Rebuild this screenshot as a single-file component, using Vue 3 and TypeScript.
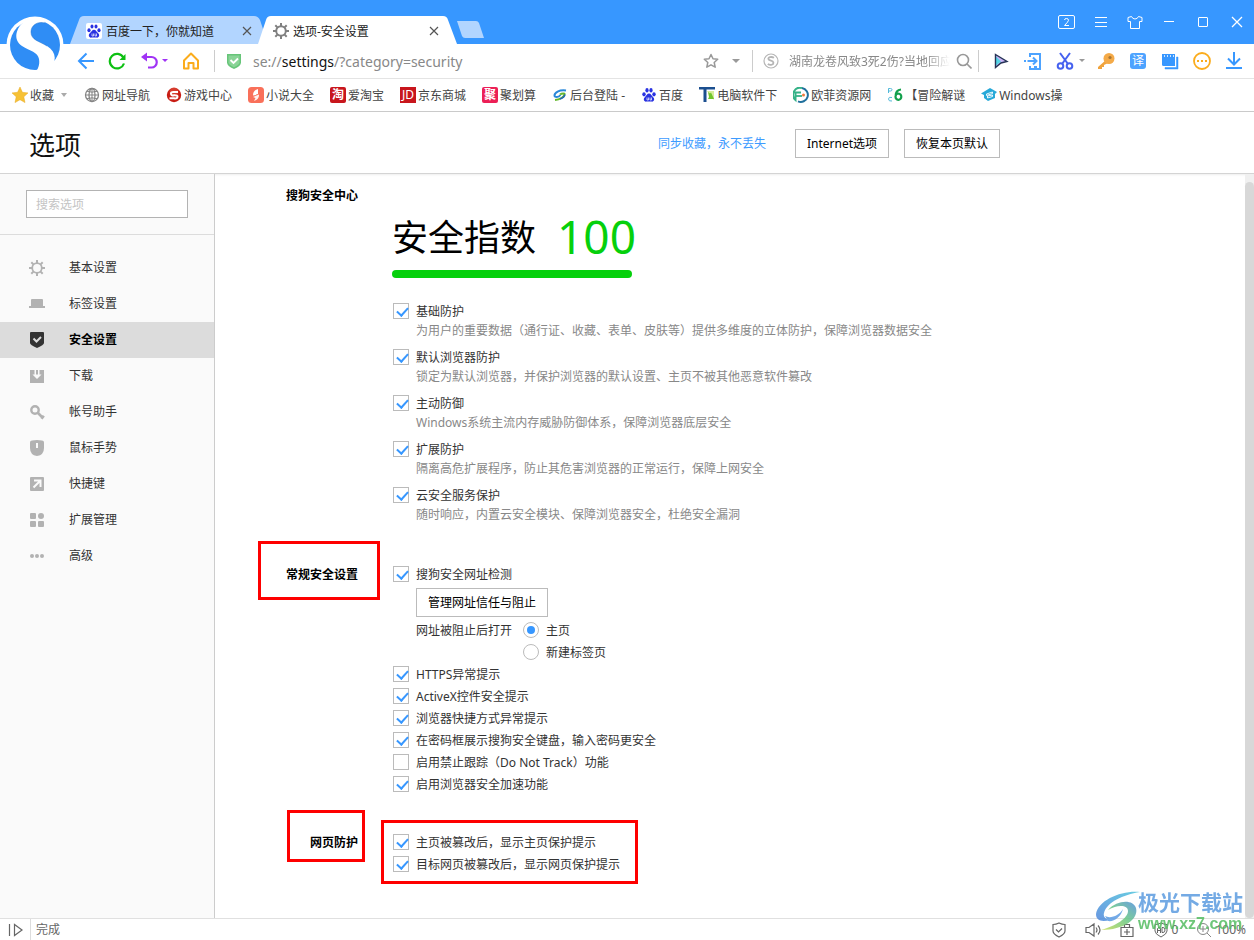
<script setup lang="ts">
import { ref } from 'vue'

interface Bookmark { id: string; label: string }
interface NavItem { id: string; label: string }
interface Option { id: string; label: string; checked: boolean; note?: string }

const bookmarks: Bookmark[] = [
  { id: 'globe', label: '网址导航' },
  { id: 'games', label: '游戏中心' },
  { id: 'novel', label: '小说大全' },
  { id: 'tao', label: '爱淘宝' },
  { id: 'jd', label: '京东商城' },
  { id: 'ju', label: '聚划算' },
  { id: 'swirl', label: '后台登陆 -' },
  { id: 'baidu', label: '百度' },
  { id: 'pc', label: '电脑软件下' },
  { id: 'ofei', label: '欧菲资源网' },
  { id: 'pc6', label: '【冒险解谜' },
  { id: 'win', label: 'Windows操' },
]

const navItems: NavItem[] = [
  { id: 'basic', label: '基本设置' },
  { id: 'tabs', label: '标签设置' },
  { id: 'security', label: '安全设置' },
  { id: 'download', label: '下载' },
  { id: 'account', label: '帐号助手' },
  { id: 'mouse', label: '鼠标手势' },
  { id: 'shortcut', label: '快捷键' },
  { id: 'extension', label: '扩展管理' },
  { id: 'advanced', label: '高级' },
]
const activeNav = ref('security')

const protections = ref<Option[]>([
  { id: 'p1', label: '基础防护', checked: true, note: '为用户的重要数据（通行证、收藏、表单、皮肤等）提供多维度的立体防护，保障浏览器数据安全' },
  { id: 'p2', label: '默认浏览器防护', checked: true, note: '锁定为默认浏览器，并保护浏览器的默认设置、主页不被其他恶意软件篡改' },
  { id: 'p3', label: '主动防御', checked: true, note: 'Windows系统主流内存威胁防御体系，保障浏览器底层安全' },
  { id: 'p4', label: '扩展防护', checked: true, note: '隔离高危扩展程序，防止其危害浏览器的正常运行，保障上网安全' },
  { id: 'p5', label: '云安全服务保护', checked: true, note: '随时响应，内置云安全模块、保障浏览器安全，杜绝安全漏洞' },
])
const siteCheck = ref(true)
const openAfterBlock = ref('home')
const general = ref<Option[]>([
  { id: 'g1', label: 'HTTPS异常提示', checked: true },
  { id: 'g2', label: 'ActiveX控件安全提示', checked: true },
  { id: 'g3', label: '浏览器快捷方式异常提示', checked: true },
  { id: 'g4', label: '在密码框展示搜狗安全键盘，输入密码更安全', checked: true },
  { id: 'g5', label: '启用禁止跟踪（Do Not Track）功能', checked: false },
  { id: 'g6', label: '启用浏览器安全加速功能', checked: true },
])
const pageGuard = ref<Option[]>([
  { id: 'w1', label: '主页被篡改后，显示主页保护提示', checked: true },
  { id: 'w2', label: '目标网页被篡改后，显示网页保护提示', checked: true },
])
</script>

<template>
  <div class="browser">
    <svg class="logo" viewBox="0 0 58 58" aria-hidden="true">
      <circle cx="29" cy="29" r="28.5" fill="#fff" />
      <circle cx="29" cy="29" r="25" fill="#2f8df5" />
      <path d="M20 4 C9 12 7 24 16 30 C24 35 32 36 33 43 C34 49 32 53 29 57 L43 55 C51 46 51 36 41 30 C33 25 25 24 25 16 C25 9 32 5 39 7 L36 2 L24 2 Z" fill="#fff" />
      <path d="M39 7 C32 5 25 9 25 16 C25 24 33 25 41 30" fill="none" stroke="#1c6fd0" stroke-width="1" opacity=".5" />
    </svg>

    <header class="tabbar">
      <div class="tab tab-idle">
        <svg class="tab-shape" viewBox="0 0 198 28" preserveAspectRatio="none" aria-hidden="true">
          <path d="M0 28 L9 4 Q10 0 14 0 H184 Q188 0 190 4 L198 28 Z" fill="#b2d5ff" />
        </svg>
        <svg class="i16" viewBox="0 0 16 16" aria-hidden="true">
          <rect width="16" height="16" rx="2" fill="#fff" />
          <g fill="#2932e1">
            <ellipse cx="3" cy="7.300" rx="1.600" ry="2" /><ellipse cx="6" cy="3.500" rx="1.500" ry="2" />
            <ellipse cx="10" cy="3.500" rx="1.500" ry="2" /><ellipse cx="13" cy="7.300" rx="1.600" ry="2" />
            <path d="M8 6.800 C6 6.800 5.600 8.800 4 10 C2 11.600 2.600 15 5.500 14.600 Q8 14.200 10.500 14.600 C13.400 15 14 11.600 12 10 C10.400 8.800 10 6.800 8 6.800Z" />
          </g>
          <path d="M6 10.500v2.500h1.500v-2.500M9 10.500v2.500h1.500v-2.500" stroke="#fff" stroke-width=".7" fill="none" />
        </svg>
        <span class="tab-title">百度一下，你就知道</span>
        <button class="tab-close" aria-label="关闭标签"><svg viewBox="0 0 10 10"><path d="M1 1l8 8M9 1l-8 8" stroke="#555" stroke-width="1.200" /></svg></button>
      </div>
      <div class="tab tab-current">
        <svg class="tab-shape" viewBox="0 0 199 28" preserveAspectRatio="none" aria-hidden="true">
          <path d="M0 28 L8 4 Q9 0 13 0 H185 Q189 0 190 4 L199 28 Z" fill="#fff" />
        </svg>
        <svg class="i16" viewBox="0 0 16 16" fill="none" stroke="#808080" aria-hidden="true">
          <circle cx="8" cy="8" r="4.800" stroke-width="2" />
          <path d="M8 0v3M8 13v3M0 8h3M13 8h3M2.300 2.300l2.100 2.100M11.600 11.600l2.100 2.100M13.700 2.300l-2.100 2.100M4.400 11.600l-2.100 2.100" stroke-width="2" />
        </svg>
        <span class="tab-title">选项-安全设置</span>
        <button class="tab-close" aria-label="关闭标签"><svg viewBox="0 0 10 10"><path d="M1 1l8 8M9 1l-8 8" stroke="#555" stroke-width="1.200" /></svg></button>
      </div>
      <button class="new-tab" aria-label="新建标签"><svg viewBox="0 0 28 17"><path d="M1 0H20Q22 0 23 2L28 17H9Q7 17 6 15Z" fill="#b2d5ff" /></svg></button>
      <div class="window-controls">
        <button aria-label="窗口数"><svg viewBox="0 0 18 18" fill="none" stroke="#fff"><rect x=".5" y="2.500" width="16" height="13" rx="1.500" /><path d="M6.500 7Q6.500 5.500 8.500 5.500T10.500 7.300Q10.500 8.500 6.500 12.500H11" /></svg></button>
        <button aria-label="菜单"><svg viewBox="0 0 18 18" stroke="#fff"><path d="M3 4.500h12M3 9.500h12M3 13.500h12" /></svg></button>
        <button aria-label="皮肤"><svg viewBox="0 0 18 18" fill="none" stroke="#fff"><path d="M5.500 3.500L2 4.500V8.500H4.500V15.500H13.500V8.500H16V4.500L12.500 3.500Q11.500 6 9 6T5.500 3.500Z" /></svg></button>
        <button aria-label="最小化"><svg viewBox="0 0 18 18" stroke="#fff"><path d="M4 8.500h10" /></svg></button>
        <button aria-label="最大化"><svg viewBox="0 0 18 18" fill="none" stroke="#fff"><rect x="4.500" y="4.500" width="9" height="9" rx=".5" /></svg></button>
        <button aria-label="关闭"><svg viewBox="0 0 18 18" stroke="#fff"><path d="M4 4l10 10M14 4L4 14" stroke-width="1.300" /></svg></button>
      </div>
    </header>

    <div class="toolbar">
      <div class="nav-buttons">
        <button class="tool back" aria-label="后退"><svg viewBox="0 0 18 18" fill="none" stroke="#3797ff" stroke-width="2"><path d="M17 9H2M9.500 1.500L2 9l7.500 7.500" /></svg></button>
        <button class="tool" aria-label="刷新"><svg viewBox="0 0 18 18" fill="none" stroke="#0dc012" stroke-width="2.200"><path d="M16 11.500A7.300 7.300 0 1 1 15.300 5.300" /><path d="M17.500 2v6H11.500z" fill="#0dc012" stroke="none" /></svg></button>
        <button class="tool undo" aria-label="恢复"><svg viewBox="0 0 18 18" fill="none" stroke="#a033f5" stroke-width="2.200"><path d="M4 5h7.500a4.800 4.800 0 0 1 0 10.500H8" /><path d="M1 5l6-4.500v9z" fill="#a033f5" stroke="none" /></svg></button>
        <svg class="caret" viewBox="0 0 8 4" aria-hidden="true"><path d="M1 0h6L4 3z" fill="#a033f5" /></svg>
        <button class="tool home" aria-label="主页"><svg viewBox="0 0 18 18" fill="none" stroke="#fbac1c" stroke-width="2"><path d="M2 8.500L9 1.500l7 7V16.500H11.500V11h-5v5.500H2z" stroke-linejoin="round" /></svg></button>
      </div>
      <div class="address">
        <svg class="i16" viewBox="0 0 16 16" aria-hidden="true"><path d="M1 1h14v8.500Q15 13 8 16Q1 13 1 9.500z" fill="#67c579" /><path d="M2.500 2.500h11v7q0 2-5.500 4.800Q2.500 11.500 2.500 9.500z" fill="#8ad497" /><path d="M4.500 7l3 3 4.500-4.500" stroke="#fff" stroke-width="1.800" fill="none" /></svg>
        <span class="url">se://<b>settings</b>/?category=security</span>
        <button class="star" aria-label="收藏"><svg class="i16" viewBox="0 0 16 16" fill="none" stroke="#999" stroke-width="1.500"><path d="M8 1.500l2 4.300 4.700.5-3.500 3.200 1 4.700L8 11.800l-4.200 2.400 1-4.700L1.300 6.300 6 5.800z" stroke-linejoin="round" /></svg></button>
        <svg class="caret" viewBox="0 0 8 4" aria-hidden="true"><path d="M0 0h8L4 4z" fill="#999" /></svg>
      </div>
      <div class="search">
        <svg class="i16" viewBox="0 0 16 16" fill="none" stroke="#b5b5b5" aria-hidden="true"><circle cx="8" cy="8" r="7" stroke-width="1.200" /><path d="M11 4.800Q9 3.600 7 4.200C4.500 5 5 7.200 8 7.700S11.200 11 8.800 11.700Q6.500 12.200 4.800 11" stroke-width="1.800" /></svg>
        <input class="search-input" type="text" aria-label="搜索" placeholder="湖南龙卷风致3死2伤?当地回应" />
        <button class="find" aria-label="搜索"><svg class="i16" viewBox="0 0 16 16" fill="none" stroke="#999" stroke-width="1.600"><circle cx="7" cy="7" r="5.500" /><path d="M11 11l4.500 4.500" /></svg></button>
      </div>
      <div class="extensions">
        <button class="tool" aria-label="指针"><svg viewBox="0 0 18 18"><path d="M3.500 2.500L15 9.500 9 11 3.500 15.500z" fill="#c9b3f5" /><path d="M3.500 4L9 9.500 3.500 14z" fill="#53d6e6" /><path d="M3.500 2.500L15 9.500 9 11 3.500 15.500z" fill="none" stroke="#263456" stroke-width="1.400" /></svg></button>
        <button class="tool" aria-label="发送到手机"><svg viewBox="0 0 18 18" fill="none" stroke="#4da3ff" stroke-width="2"><path d="M6 5V2h10v15H6v-3" /><path d="M0 9h2M3.500 9H12M9 5.500L12.500 9 9 12.500M10 15h3" /></svg></button>
        <button class="tool" aria-label="截图"><svg viewBox="0 0 18 18" fill="none" stroke="#4662ef" stroke-width="2"><circle cx="4.500" cy="14" r="2.800" /><circle cx="13.500" cy="14" r="2.800" /><path d="M4 1l8 11M14 1L6 12" /></svg></button>
        <svg class="caret small" viewBox="0 0 8 4" aria-hidden="true"><path d="M1 0h6L4 3z" fill="#999" /></svg>
        <button class="tool" aria-label="密码"><svg viewBox="0 0 18 18"><path d="M9 8L1 15v2h4v-2h2v-2l4-2z" fill="#f0a33c" /><circle cx="12" cy="6.500" r="5.500" fill="#f4aa48" /><circle cx="13" cy="5.500" r="1.600" fill="#a77534" /></svg></button>
        <button class="tool" aria-label="翻译"><span class="translate">译</span></button>
        <button class="tool" aria-label="多窗口"><svg viewBox="0 0 18 18"><path d="M1 2h13v12H2.500Q1 14 1 12.500z" fill="#3797ff" /><path d="M15.500 5H17v12H4v-1.500h11.500z" fill="#3797ff" stroke="#3797ff" stroke-width=".5" /><path d="M3 4h1M6 4h1M9 4h1M12 4h1" stroke="#fff" stroke-width="1.500" /></svg></button>
        <button class="tool" aria-label="更多"><svg viewBox="0 0 18 18"><circle cx="9" cy="9" r="8" fill="none" stroke="#fbac1c" stroke-width="1.800" /><g fill="#fbac1c"><rect x="4" y="8" width="2" height="2" /><rect x="8" y="8" width="2" height="2" /><rect x="12" y="8" width="2" height="2" /></g></svg></button>
        <button class="tool" aria-label="下载"><svg viewBox="0 0 18 18" fill="none" stroke="#3797ff" stroke-width="2"><path d="M9 0v12M3 6.500L9 12.500l6-6M1 16h16" /></svg></button>
      </div>
    </div>

    <nav class="bookmarks" aria-label="收藏栏">
      <button class="bookmark fav">
        <svg class="i16" viewBox="0 0 16 16" aria-hidden="true"><path d="M8 0l2.400 5.300 5.600.6-4.200 3.900L13 15.600 8 12.700 3 15.600 4.200 9.800 0 5.900l5.600-.6z" fill="#f6c135" stroke="#e8ab24" stroke-width=".5" /></svg>
        <span class="bookmark-label">收藏</span>
        <svg class="caret" viewBox="0 0 8 4" aria-hidden="true"><path d="M1 0h6L4 4z" fill="#aaa" /></svg>
      </button>
      <a v-for="b in bookmarks" :key="b.id" class="bookmark" href="#">
        <svg v-if="b.id === 'globe'" class="i16" viewBox="0 0 16 16" fill="none" stroke="#858585" stroke-width="1.300"><circle cx="8" cy="8" r="6.500" /><ellipse cx="8" cy="8" rx="3" ry="6.500" /><path d="M1.500 8h13M8 1.500v13M3 4.300q5 1.700 10 0M3 11.700q5-1.700 10 0" stroke-width="1" /></svg>
        <svg v-else-if="b.id === 'games'" class="i16" viewBox="0 0 16 16"><circle cx="8" cy="8" r="7.200" fill="#c81d14" /><circle cx="8" cy="5" r="4.500" fill="#e0513f" opacity=".6" /><path d="M12 5H7.500Q4.500 5 5 7t3 1.200Q12 8 11.500 10T8 11.300H3.500" fill="none" stroke="#fff" stroke-width="2" /></svg>
        <svg v-else-if="b.id === 'novel'" class="i16" viewBox="0 0 16 16"><rect width="16" height="16" rx="3.500" fill="#f9705a" /><path d="M10 2Q5 3 5 8.500L8 8v-.5L10 7z" fill="#fff" /><path d="M5 10L11 7.500Q11.500 12 6 14l1.500-3z" fill="#fff" opacity=".9" /></svg>
        <span v-else-if="b.id === 'tao'" class="tile tao">淘</span>
        <span v-else-if="b.id === 'jd'" class="tile jd">JD</span>
        <span v-else-if="b.id === 'ju'" class="tile ju">聚</span>
        <svg v-else-if="b.id === 'swirl'" class="i16" viewBox="0 0 16 16" fill="none"><path d="M14 3.500C7 2.500 2.500 6 2.500 8.500c0 2 4 2 6-.5" stroke="#2988d9" stroke-width="2" /><path d="M8 7.500c2-1.500 5-1.500 4.500 0C12 10 8 12.500 3 13" stroke="#65b82e" stroke-width="2" /><path d="M13 7.500c-.5 2.500-3 3.800-5 4.500" stroke="#2467b6" stroke-width="1.500" /></svg>
        <svg v-else-if="b.id === 'baidu'" class="i16" viewBox="0 0 16 16"><g fill="#2932e1"><ellipse cx="3" cy="7.300" rx="1.700" ry="2.100" /><ellipse cx="6" cy="3.300" rx="1.600" ry="2.200" /><ellipse cx="10" cy="3.300" rx="1.600" ry="2.200" /><ellipse cx="13" cy="7.300" rx="1.700" ry="2.100" /><path d="M8 6.500C6 6.500 5.600 8.600 4 10c-2 1.600-1.400 5 1.500 4.600Q8 14.200 10.500 14.600C13.400 15 14 11.600 12 10 10.400 8.600 10 6.500 8 6.500z" /></g><path d="M6 10.500v2.500h1.500v-2.500M9 10.500v2.500h1.500v-2.500" stroke="#fff" stroke-width=".7" fill="none" /></svg>
        <svg v-else-if="b.id === 'pc'" class="i16" viewBox="0 0 16 16"><path d="M0 0h16v2.500H7.500V15H4.500V2.500H0z" fill="#1b4f8f" /><path d="M8 4h7v9z" fill="#d7ed9b" /><path d="M9 5l2 1.500 1-1 3 6.500H9l1-2z" fill="#71c52c" /></svg>
        <svg v-else-if="b.id === 'ofei'" class="i16" viewBox="0 0 16 16" fill="none"><path d="M9 1A7 7 0 0 0 2.500 13V5.500H8" stroke="#35b287" stroke-width="2" /><path d="M9 1a7 7 0 1 1-4 13.300" stroke="#1f6f9c" stroke-width="2" /><path d="M3 9h6" stroke="#35b287" stroke-width="1.800" /><circle cx="10.500" cy="8" r="1.500" fill="#ef7b3c" /></svg>
        <svg v-else-if="b.id === 'pc6'" class="i16" viewBox="0 0 16 16" fill="none"><path d="M14 2.500Q8.500 3 8.500 9.500a2.900 3.200 0 1 0 3-3Q9 6.500 8.500 9" stroke="#12a04c" stroke-width="2.200" /><path d="M1.500 6V1.500h2q1.500 0 1.500 1.200T3.500 4h-2M5 10.500q-3.500-1-3.500 1.500T5 14" stroke="#52b9da" stroke-width="1" /></svg>
        <svg v-else class="i16" viewBox="0 0 16 16"><path d="M0 6.500L9 1l7 4-2 2v4l-7 3-4-3V8z" fill="#27a9d8" /><path d="M5.500 7l6-2v1.500l-6 2zM6.500 9l5-1v1.500l-5 1.500z" stroke="#fff" fill="none" stroke-width=".9" /></svg>
        <span class="bookmark-label">{{ b.label }}</span>
      </a>
    </nav>

    <div class="page-head">
      <div class="page-head-inner">
        <h1>选项</h1>
        <a class="sync" href="#">同步收藏，永不丢失</a>
        <button class="btn">Internet选项</button>
        <button class="btn">恢复本页默认</button>
      </div>
    </div>

    <div class="body">
      <aside class="sidebar">
        <div class="side-search"><input type="text" placeholder="搜索选项" aria-label="搜索选项" /></div>
        <nav class="side-nav" aria-label="设置分类">
          <button v-for="n in navItems" :key="n.id" class="nav-item" :class="{ active: n.id === activeNav }" @click="activeNav = n.id">
            <svg class="i16" viewBox="0 0 16 16" fill="currentColor" aria-hidden="true">
              <g v-if="n.id === 'basic'" fill="none" stroke="currentColor"><circle cx="8" cy="8" r="4.800" stroke-width="1.800" /><path d="M8 0v3M8 13v3M0 8h3M13 8h3M2.300 2.300l2.100 2.100M11.600 11.600l2.100 2.100M13.700 2.300l-2.100 2.100M4.400 11.600l-2.100 2.100" stroke-width="2" /></g>
              <path v-else-if="n.id === 'tabs'" d="M3 3h10q1 0 1 1v6h2v2H0v-2h2V4q0-1 1-1z" />
              <g v-else-if="n.id === 'security'"><path d="M2 0h12q1 0 1 1v10q0 2-7 5-7-3-7-5V1q0-1 1-1z" /><path d="M4.500 6.500l3 3L12 5" stroke="#dcdcdc" stroke-width="2" fill="none" /></g>
              <path v-else-if="n.id === 'download'" d="M1 2h4.500v4.500H3.500L8 11l4.500-4.500h-2V2H15v13H1zM7 2h2v4.500H7z" fill-rule="evenodd" />
              <g v-else-if="n.id === 'account'" fill="none" stroke="currentColor"><circle cx="6" cy="6" r="3.700" stroke-width="2.400" /><path d="M8.500 8.500L14 14M12.500 14.800l2.300-3" stroke-width="2.600" /></g>
              <path v-else-if="n.id === 'mouse'" fill-rule="evenodd" d="M3 0.500Q8-.5 13 .5q2 0 2 2V8q0 7-7 8-7-1-7-8V2.500q0-2 2-2zM7 3h2v5H7z" />
              <g v-else-if="n.id === 'shortcut'"><rect x="1" y="1" width="14" height="14" rx="1" /><path d="M5 4.500h6.500V11M11 5l-6.500 6.500" stroke="#fafafa" stroke-width="2" fill="none" /></g>
              <g v-else-if="n.id === 'extension'"><rect x="1" y="1" width="6" height="6" rx="1" /><circle cx="12" cy="4" r="3" /><rect x="1" y="9" width="6" height="6" rx="1" /><rect x="9" y="9" width="6" height="6" rx="1" /></g>
              <g v-else><circle cx="3" cy="8" r="2" /><circle cx="8" cy="8" r="2" /><circle cx="13" cy="8" r="2" /></g>
            </svg>
            <span>{{ n.label }}</span>
          </button>
        </nav>
      </aside>

      <main class="content">
        <section class="group">
          <h2>搜狗安全中心</h2>
          <div class="center">
            <div class="score"><span>安全指数</span><strong>100</strong></div>
            <div class="score-bar"></div>
            <div class="protections">
              <div v-for="p in protections" :key="p.id">
                <label class="row"><input v-model="p.checked" type="checkbox" />{{ p.label }}</label>
                <p class="note">{{ p.note }}</p>
              </div>
            </div>
          </div>
        </section>

        <section class="group">
          <span class="mark mark-general"></span>
          <h2>常规安全设置</h2>
          <div>
            <label class="row"><input v-model="siteCheck" type="checkbox" />搜狗安全网址检测</label>
            <button class="btn manage">管理网址信任与阻止</button>
            <div class="blocked" role="radiogroup" aria-labelledby="blocked-label">
              <span id="blocked-label">网址被阻止后打开</span>
              <div>
                <label class="row"><input v-model="openAfterBlock" type="radio" name="blocked" value="home" />主页</label>
                <label class="row"><input v-model="openAfterBlock" type="radio" name="blocked" value="tab" />新建标签页</label>
              </div>
            </div>
            <label v-for="o in general" :key="o.id" class="row"><input v-model="o.checked" type="checkbox" />{{ o.label }}</label>
          </div>
        </section>

        <section class="group">
          <span class="mark mark-guard"></span>
          <span class="mark mark-options"></span>
          <h2>网页防护</h2>
          <div>
            <label v-for="o in pageGuard" :key="o.id" class="row"><input v-model="o.checked" type="checkbox" />{{ o.label }}</label>
          </div>
        </section>
      </main>
      <div class="scrollbar"><div class="thumb"></div></div>
    </div>

    <footer class="status">
      <button class="side-toggle" aria-label="展开侧栏"><svg class="i16" viewBox="0 0 16 16" fill="none" stroke="#666"><path d="M1.500 2v12M6.500 2.500v11L14 8z" stroke-width="1.200" /></svg></button>
      <span class="done">完成</span>
      <div class="status-icons">
        <svg class="i16" viewBox="0 0 16 16" fill="none" stroke="#666"><path d="M8 1q3 1.500 6 1.500V9q0 3-6 6-6-3-6-6V2.500Q5 2.500 8 1zM5 7.500l2.500 2.500L11 6.500" stroke-width="1.200" /></svg>
        <svg class="i16" viewBox="0 0 16 16" fill="none" stroke="#666"><path d="M1 5.500h3L9 2v12l-5-3.500H1zM11 5.500q2 2.500 0 5M13 3.500q4 4.500 0 9" stroke-width="1.200" /></svg>
        <svg class="i16" viewBox="0 0 16 16" fill="none" stroke="#666"><path d="M2 5.500h12v9H2zM5.500 5V2.500h5V5M5 10h6M8 7v6" stroke-width="1.200" /></svg>
        <span class="ad"><svg class="i16" viewBox="0 0 16 16" fill="none" stroke="#666"><path d="M8 1q3 1.500 6 1.500V9q0 3-6 6-6-3-6-6V2.500Q5 2.500 8 1z" /><path d="M4.500 11V6.500L6 5l1.500 1.500V11M4.500 8.500h3M9 5.500h1q2 0 2 2.500t-2 2.500H9z" /></svg>0</span>
        <span class="zoom"><svg class="i16" viewBox="0 0 16 16" fill="none" stroke="#888"><circle cx="7" cy="7" r="5.500" /><path d="M4 7h6M7 4v6M11 11l4 4" /></svg>100%</span>
      </div>
    </footer>

    <div class="watermark">
      <svg viewBox="0 0 46 40" aria-hidden="true">
        <defs>
          <linearGradient id="wm-blue" x1="1" y1="0" x2="0" y2="1"><stop offset="0" stop-color="#4fc5dc" /><stop offset="1" stop-color="#4f86dc" /></linearGradient>
          <linearGradient id="wm-green" x1="0" y1="1" x2="1" y2="0"><stop offset="0" stop-color="#c9dc55" /><stop offset=".55" stop-color="#67c784" /><stop offset="1" stop-color="#4f8fdc" /></linearGradient>
        </defs>
        <path d="M45 1C27-1 3 9 1 23c0 7 6 8 14 6C10 28 8 26 9 22 12 11 28 4 45 1z" fill="url(#wm-blue)" />
        <path d="M13 19C22 9 38 8 41 17c3 11-12 22-35 22 15-4 27-12 27-19 0-6-10-7-20-1z" fill="url(#wm-green)" />
        <path d="M10 25c5 3 14 0 18-7-2 8-9 13-15 12z" fill="#5c9ce3" />
      </svg>
      <div class="watermark-text"><span class="wm-name">极光下载站</span><span class="wm-site">www.xz7.com</span></div>
    </div>
  </div>
</template>

<style>
html, body { margin: 0; }
</style>

<style scoped>
* { box-sizing: border-box; }
.browser {
  position: relative;
  display: flex;
  flex-direction: column;
  min-height: 100vh;
  background: #fff;
  color: #333;
  font: 12px/22px "Noto Sans", "Noto Sans CJK SC", sans-serif;
}
button, input { font: inherit; color: inherit; }
button { margin: 0; padding: 0; border: 0; background: none; }
a { text-decoration: none; }
h1, h2, p { margin: 0; }
svg { display: block; flex: none; }
.i16 { width: 16px; height: 16px; }
.logo { position: absolute; z-index: 3; left: 6px; top: 16px; width: 58px; height: 58px; }

.tabbar { display: flex; align-items: flex-end; height: 44px; padding-left: 70px; background: #3797ff; }
.tab { position: relative; display: flex; align-items: center; gap: 4px; width: 198px; height: 28px; padding: 2px 16px 0 16px; color: #222; }
.tab > * { position: relative; }
.tab .tab-shape { position: absolute; inset: 0; width: 100%; height: 100%; }
.tab-current { z-index: 1; width: 199px; margin-left: -10px; padding: 2px 18px 0 15px; }
.tab-title { flex: 1; padding-top: 2px; white-space: nowrap; }
.tab-close { width: 10px; height: 10px; }
.new-tab { width: 28px; height: 17px; margin: 0 0 6px -1px; }
.window-controls { display: flex; align-self: stretch; margin-left: auto; }
.window-controls button { display: flex; align-items: center; justify-content: center; width: 34px; }
.window-controls svg { width: 18px; height: 18px; }

.toolbar { display: flex; align-items: center; height: 35px; padding-left: 77px; border-bottom: 1px solid #e4e4e4; }
.tool svg { width: 18px; height: 18px; }
.nav-buttons { display: flex; align-items: center; height: 22px; padding-right: 14px; border-right: 1px solid #ccc; }
.nav-buttons .tool { margin-right: 14px; }
.nav-buttons .back { margin-right: 13px; }
.nav-buttons .undo { margin-right: 3px; }
.nav-buttons .caret { margin-right: 13px; }
.nav-buttons .home { margin-right: 0; }
.caret { width: 8px; height: 4px; }
.address { display: flex; flex: 1; align-items: center; height: 22px; margin-left: 11px; padding-right: 12px; border-right: 1px solid #ccc; color: #888; }
.url { flex: 1; margin-left: 11px; padding-top: 2px; font-size: 14px; white-space: nowrap; }
.url b { font-weight: 400; color: #111; }
.star { margin-right: 13px; }
.search { display: flex; align-items: center; width: 226px; height: 22px; padding: 0 6px 0 10px; border-right: 1px solid #ccc; }
.search-input { flex: 1; min-width: 0; height: 22px; margin: 0 6px 0 10px; padding: 2px 0 0; border: 0; outline: 0; background: none; -webkit-mask-image: linear-gradient(90deg, #000 85%, transparent); mask-image: linear-gradient(90deg, #000 85%, transparent); }
.search-input::placeholder { color: #888; opacity: 1; }
.extensions { display: flex; align-items: center; gap: 14px; margin: 0 11px 0 13px; }
.extensions .small { margin: 0 -3px 0 -10px; }
.translate { display: block; width: 16px; height: 16px; margin: 0 1px; border-radius: 3px; background: #4da3ff; color: #fff; line-height: 16px; }

.bookmarks { display: flex; align-items: center; gap: 16px; height: 33px; padding-left: 12px; border-bottom: 1px solid #c8c8c8; overflow: hidden; }
.bookmark { display: flex; flex: none; align-items: center; gap: 2px; color: #444; white-space: nowrap; }
.bookmark-label { padding-top: 2px; }
.fav .caret { margin-left: 4px; }
.tile { width: 16px; height: 16px; overflow: hidden; border-radius: 2px; color: #fff; font-weight: 700; line-height: 16px; text-align: center; }
.tao { background: #c8161d; }
.jd { border-radius: 0; background: #c8161d; font-weight: 400; }
.ju { background: #ec1f56; }

.page-head { border-bottom: 1px solid #d4d4d4; box-shadow: 0 1px 2px #eee; }
.page-head-inner { display: flex; align-items: center; max-width: 1000px; height: 61px; padding: 2px 0 0 29px; }
.page-head h1 { flex: 1; padding-top: 2px; color: #111; font-size: 26px; font-weight: 400; line-height: 40px; }
.sync { margin-right: 29px; color: #3d9bff; }
.btn { height: 29px; padding: 0 11px; border: 1px solid #bbb; background: #fff; color: #000; white-space: nowrap; }
.page-head .btn + .btn { margin-left: 15px; }

.body { display: flex; flex: 1; }
.sidebar { flex: none; width: 215px; border-right: 1px solid #ccc; background: #fafafa; }
.side-search { padding: 16px 26px; border-bottom: 1px solid #dcdcdc; }
.side-search input { display: block; width: 100%; height: 28px; padding: 0 9px; border: 1px solid #b3b3b3; outline: 0; background: #fff; }
.side-search input::placeholder { color: #c4c4c4; opacity: 1; }
.side-nav { padding-top: 15px; }
.nav-item { display: flex; align-items: center; gap: 24px; width: 100%; height: 36px; padding-left: 29px; text-align: left; }
.nav-item svg { color: #b2b2b2; }
.nav-item.active { background: #dcdcdc; color: #000; font-weight: 700; }
.nav-item.active svg { color: #333; }

.content { flex: 1; min-width: 0; padding-top: 10px; }
.group { position: relative; display: grid; grid-template-columns: 143px 1fr; column-gap: 34px; margin-bottom: 36px; }
.group h2 { padding-top: 1px; color: #000; font-size: 12px; line-height: 22px; text-align: right; }
.center { padding: 26px 0 3px; }
.score { display: flex; align-items: center; gap: 21px; height: 56px; color: #000; font-size: 36px; white-space: nowrap; }
.score strong { padding-bottom: 4px; color: #06d00c; font-size: 46px; font-weight: 400; }
.score-bar { width: 240px; height: 8px; margin: 4px 0 22px; border-radius: 4px; background: #06d00c; }
.protections { display: flex; flex-direction: column; gap: 6px; }
.row { display: flex; align-items: center; gap: 7px; height: 22px; padding: 2px 0 0 1px; }
.note { padding-left: 24px; color: #888; line-height: 18px; }
.row input { position: relative; flex: none; appearance: none; width: 16px; height: 16px; margin: 0 0 2px; border: 1px solid #bbb; background: #fff; }
.row input[type="radio"] { border-radius: 50%; }
.row input[type="checkbox"]:checked::after { content: ""; position: absolute; left: 5px; top: 1px; width: 5px; height: 9px; border: solid #3797ff; border-width: 0 2px 2px 0; transform: rotate(42deg); }
.row input[type="radio"]:checked::after { content: ""; position: absolute; inset: 3px; border-radius: 50%; background: #3797ff; }
.manage { display: block; margin: 3px 0 2px 24px; }
.blocked { display: flex; gap: 10px; padding-left: 24px; }
#blocked-label { padding-top: 1px; }
.mark { position: absolute; z-index: 1; border: 3px solid #fe0000; pointer-events: none; }
.mark-general { left: 43px; top: -22px; width: 122px; height: 59px; }
.mark-guard { left: 72px; top: -21px; width: 78px; height: 52px; }
.mark-options { left: 166px; top: -11px; width: 257px; height: 64px; }
.scrollbar { flex: none; width: 9px; padding-top: 8px; background: #f0f0f0; }
.thumb { height: 100%; border-radius: 5px; background: #d8d8d8; }

.status { display: flex; align-items: center; height: 22px; padding: 0 8px; border-top: 1px solid #e0e0e0; color: #666; }
.side-toggle { width: 23px; height: 21px; padding: 3px 0; border-right: 1px solid #ddd; }
.done { margin-left: 5px; }
.status-icons { display: flex; align-items: center; gap: 18px; margin-left: auto; }
.ad, .zoom { display: flex; align-items: center; gap: 3px; }

.watermark { position: absolute; z-index: 4; right: 11px; bottom: 7px; display: flex; opacity: .85; pointer-events: none; }
.watermark svg { width: 46px; height: 40px; margin: 1px -3px 0 0; }
.watermark-text { display: flex; flex-direction: column; }
.wm-name { color: #5c9ce0; font-size: 21px; font-weight: 700; line-height: 25px; }
.wm-site { color: #55bd62; font: 700 16px/18px "Liberation Sans", Arial, sans-serif; }
</style>
